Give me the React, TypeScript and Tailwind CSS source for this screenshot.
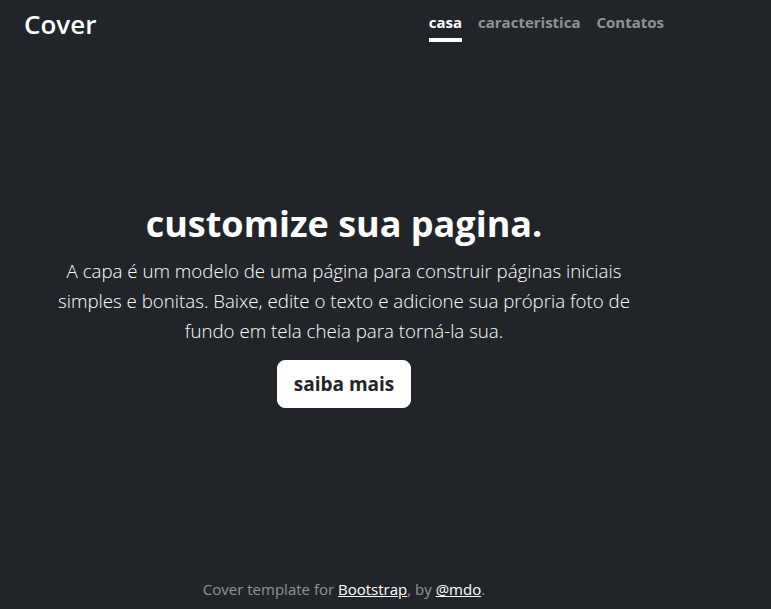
export default function App() {
  const font = { fontFamily: '"Open Sans", "Noto Sans", sans-serif' };

  return (
    <div className="min-h-[609px] h-[609px] bg-[#212529] text-white" style={font}>
      <div className="ml-2 flex h-full w-[672px] flex-col px-4 pb-2">
        {/* header */}
        <header className="mb-auto flex items-start justify-between">
          <h3 className="mt-[9px] text-[26px] font-semibold leading-[30px]">Cover</h3>
          <nav className="mt-[6px] flex gap-4 text-[15px] font-bold leading-6">
            <a className="border-b-4 border-white py-1 text-white">casa</a>
            <a className="border-b-4 border-transparent py-1 text-white/50">caracteristica</a>
            <a className="border-b-4 border-transparent py-1 text-white/50">Contatos</a>
          </nav>
        </header>

        {/* main */}
        <main className="mb-3 px-4 text-center">
          <h1 className="mb-2 text-[36px] font-bold leading-[48px]">customize sua pagina.</h1>
          <p className="mb-[14px] text-[18.7px] font-light leading-[30px]">
            A capa é um modelo de uma página para construir páginas iniciais simples e bonitas.
            Baixe, edite o texto e adicione sua própria foto de fundo em tela cheia para torná-la
            sua.
          </p>
          <p className="text-[19px] leading-[30px]">
            <a className="inline-block rounded-lg border border-white bg-white px-4 py-2 font-bold text-[#212529]">
              saiba mais
            </a>
          </p>
        </main>

        {/* footer */}
        <footer className="mt-auto text-center text-[15px] leading-6 text-white/50">
          <p>
            Cover template for{" "}
            <a className="text-white underline">Bootstrap</a>, by{" "}
            <a className="text-white underline">@mdo</a>.
          </p>
        </footer>
      </div>
    </div>
  );
}
